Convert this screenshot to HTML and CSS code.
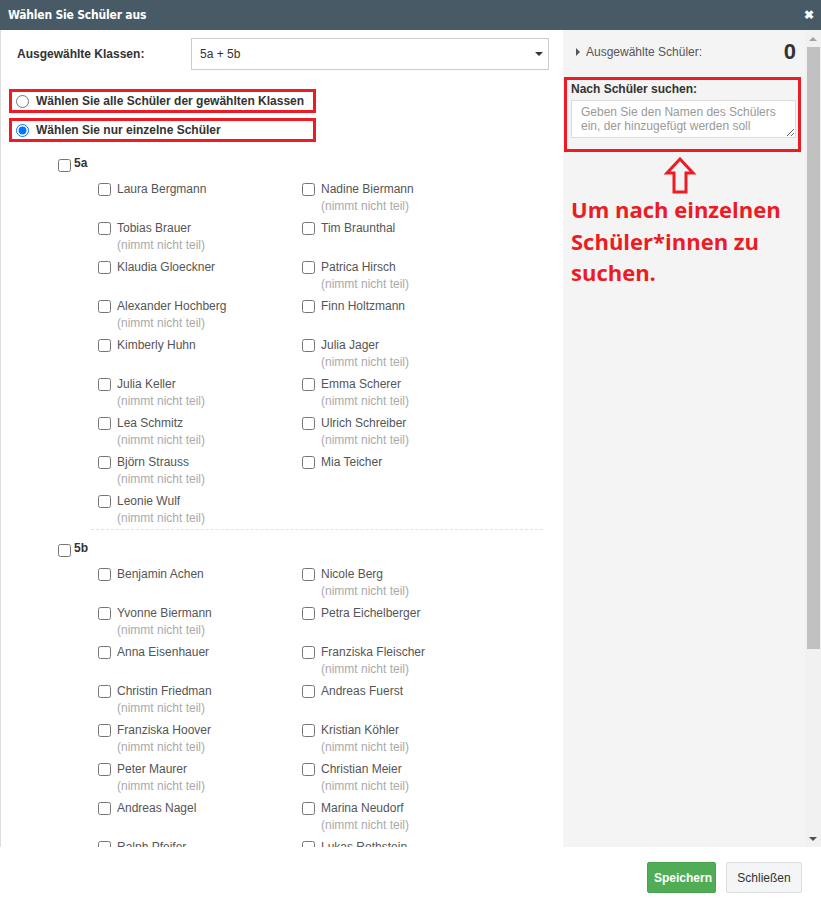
FILE: index.html
```
<!DOCTYPE html>
<html>
<head>
  <title>Wählen Sie Schüler aus</title>
  <link rel="stylesheet" href="styles.css">
</head>
<body>
  <div class="modal">
    <div class="modal-header">
      <span class="modal-title">Wählen Sie Schüler aus</span>
      <span class="close">&#10006;</span>
    </div>

    <div class="modal-body">
      <div class="main">
        <div class="class-row">
          <label class="class-label">Ausgewählte Klassen:</label>
          <div class="select">
            <span>5a + 5b</span>
            <span class="caret"></span>
          </div>
        </div>

        <label class="option first">
          <input type="radio" name="mode">
          <span>Wählen Sie alle Schüler der gewählten Klassen</span>
        </label>
        <label class="option">
          <input type="radio" name="mode" checked>
          <span>Wählen Sie nur einzelne Schüler</span>
        </label>

        <div class="group" id="group5a">
          <label class="group-head"><input type="checkbox"><span>5a</span></label>
          <div class="students"></div>
        </div>

        <div class="group" id="group5b">
          <label class="group-head"><input type="checkbox"><span>5b</span></label>
          <div class="students"></div>
        </div>
      </div>

      <div class="side">
        <div class="selected-row">
          <span class="toggle"></span>
          <span class="selected-label">Ausgewählte Schüler:</span>
          <span class="count">0</span>
        </div>
        <div class="search-box">
          <label class="search-label">Nach Schüler suchen:</label>
          <textarea placeholder="Geben Sie den Namen des Schülers ein, der hinzugefügt werden soll"></textarea>
        </div>
        <div class="hint-arrow">
          <svg width="32" height="37" viewBox="0 0 32 37">
            <path d="M16 2 L29 16 L22 16 L22 35 L10 35 L10 16 L3 16 Z" fill="none" stroke="#ed1c24" stroke-width="3" stroke-linejoin="miter"/>
          </svg>
        </div>
        <p class="hint">Um nach einzelnen Schüler*innen zu suchen.</p>
      </div>

      <div class="scrollbar">
        <div class="sb-btn up"></div>
        <div class="sb-thumb"></div>
        <div class="sb-rest"></div>
        <div class="sb-btn down"></div>
      </div>
    </div>

    <div class="modal-footer">
      <button class="btn btn-save">Speichern</button>
      <button class="btn btn-close">Schließen</button>
    </div>
  </div>

  <script>
    // Schülerlisten je Klasse: [Name, nimmt teil?]
    var classes = {
      group5a: [
        ['Laura Bergmann', true], ['Nadine Biermann', false],
        ['Tobias Brauer', false], ['Tim Braunthal', true],
        ['Klaudia Gloeckner', true], ['Patrica Hirsch', false],
        ['Alexander Hochberg', false], ['Finn Holtzmann', true],
        ['Kimberly Huhn', true], ['Julia Jager', false],
        ['Julia Keller', false], ['Emma Scherer', false],
        ['Lea Schmitz', false], ['Ulrich Schreiber', false],
        ['Björn Strauss', false], ['Mia Teicher', true],
        ['Leonie Wulf', false]
      ],
      group5b: [
        ['Benjamin Achen', true], ['Nicole Berg', false],
        ['Yvonne Biermann', false], ['Petra Eichelberger', true],
        ['Anna Eisenhauer', true], ['Franziska Fleischer', false],
        ['Christin Friedman', false], ['Andreas Fuerst', true],
        ['Franziska Hoover', false], ['Kristian Köhler', false],
        ['Peter Maurer', false], ['Christian Meier', false],
        ['Andreas Nagel', true], ['Marina Neudorf', false],
        ['Ralph Pfeifer', false], ['Lukas Rothstein', false]
      ]
    };

    Object.keys(classes).forEach(function(id) {
      var list = document.querySelector('#' + id + ' .students');
      classes[id].forEach(function(s) {
        var item = document.createElement('label');
        item.className = 'student';
        var html = '<input type="checkbox"><span class="info"><span class="name">' + s[0] + '</span>';
        if (!s[1]) {
          html += '<span class="absent">(nimmt nicht teil)</span>';
        }
        html += '</span>';
        item.innerHTML = html;
        list.appendChild(item);
      });
    });
  </script>
</body>
</html>
```

FILE: styles.css
```
* {
  box-sizing: border-box;
}

body {
  margin: 0;
  font-family: "Liberation Sans", Arial, sans-serif;
  font-size: 12px;
  color: #555;
  background: #fff;
}

.modal {
  width: 821px;
  height: 907px;
  display: flex;
  flex-direction: column;
}

.modal-header {
  height: 30px;
  flex: none;
  background: #475a65;
  color: #fff;
  display: flex;
  align-items: center;
  justify-content: space-between;
  padding: 0 7px 0 8px;
}

.modal-title {
  font-family: "DejaVu Sans Condensed", "Liberation Sans", sans-serif;
  font-weight: bold;
  font-size: 12px;
  letter-spacing: -0.2px;
}

.close {
  font-size: 12px;
  font-weight: bold;
}

.modal-body {
  height: 817px;
  flex: none;
  display: flex;
  overflow: hidden;
  border-left: 1px solid #ddd;
}

.main {
  flex: 1;
  padding: 8px 14px 0 16px;
  overflow: hidden;
}

.class-row {
  display: flex;
  align-items: center;
}

.class-label {
  width: 174px;
  flex: none;
  font-weight: bold;
  color: #333;
  font-size: 12px;
}

.select {
  width: 358px;
  flex: none;
  height: 32px;
  border: 1px solid #ccc;
  display: flex;
  align-items: center;
  justify-content: space-between;
  padding: 0 5px 0 8px;
  color: #333;
}

.caret {
  width: 0;
  height: 0;
  border-left: 4px solid transparent;
  border-right: 4px solid transparent;
  border-top: 4px solid #333;
}

.option {
  display: flex;
  align-items: center;
  width: 307px;
  height: 24px;
  margin: 5px 0 0 -8px;
  border: 3px solid #ed1c24;
  padding-left: 4px;
  font-weight: bold;
  color: #333;
}

.option.first {
  margin-top: 19px;
}

.option input {
  margin: 0 7px 0 0;
  width: 13px;
  height: 13px;
}

.group {
  margin-left: 41px;
  margin-top: 14px;
}

.group + .group {
  margin-top: 11px;
}

.group-head {
  display: flex;
  align-items: center;
  height: 17px;
  font-weight: bold;
  color: #333;
}

.group-head input {
  margin: 2px 3px 0 0;
  width: 13px;
  height: 13px;
}

.group-head span {
  margin-top: -4px;
}

.students {
  display: grid;
  grid-template-columns: 204px 1fr;
  row-gap: 5px;
  margin: 8px 0 0 33px;
  padding: 0 0 2px 7px;
  width: 452px;
  border-bottom: 1px dashed #e2e2e2;
}

.student {
  display: flex;
  align-items: flex-start;
  height: 34px;
  line-height: 17px;
}

.student input {
  margin: 2px 6px 0 0;
  width: 13px;
  height: 13px;
}

.info {
  display: flex;
  flex-direction: column;
}

.absent {
  color: #aaa;
}

.side {
  width: 242px;
  flex: none;
  background: #f4f4f4;
  padding: 0 4px 0 1px;
}

.selected-row {
  display: flex;
  align-items: center;
  height: 44px;
  padding: 0 5px 0 12px;
}

.toggle {
  width: 0;
  height: 0;
  border-top: 4px solid transparent;
  border-bottom: 4px solid transparent;
  border-left: 4px solid #555;
  margin-right: 6px;
}

.selected-label {
  flex: 1;
}

.count {
  font-size: 22px;
  font-weight: bold;
  color: #333;
}

.search-box {
  margin-top: 3px;
  border: 3px solid #ed1c24;
  height: 75px;
  padding: 2px 3px 0 4px;
}

.search-label {
  display: block;
  font-weight: bold;
  color: #333;
  line-height: 15px;
}

textarea {
  display: block;
  margin-top: 3px;
  width: 225px;
  height: 38px;
  border: 1px solid #ddd;
  padding: 4px 9px;
  font-family: "Liberation Sans", Arial, sans-serif;
  font-size: 12px;
  line-height: 14px;
  color: #555;
  resize: vertical;
  background: #fff;
}

textarea::placeholder {
  color: #999;
}

.hint-arrow {
  display: flex;
  justify-content: center;
  margin-top: 5px;
  padding-right: 6px;
}

.hint-arrow svg {
  display: block;
}

.hint {
  margin: 0;
  padding-left: 7px;
  font-family: "Open Sans", sans-serif;
  font-weight: bold;
  font-size: 22px;
  line-height: 31.5px;
  color: #ed1c24;
}

.scrollbar {
  width: 16px;
  flex: none;
  background: #f1f1f1;
  display: flex;
  flex-direction: column;
  align-items: center;
}

.sb-btn {
  height: 17px;
  flex: none;
  width: 100%;
  display: flex;
  justify-content: center;
  align-items: center;
}

.sb-btn.up::after,
.sb-btn.down::after {
  content: "";
  width: 0;
  height: 0;
  border-left: 4px solid transparent;
  border-right: 4px solid transparent;
}

.sb-btn.up::after {
  border-bottom: 4px solid #a3a3a3;
}

.sb-btn.down::after {
  border-top: 4px solid #505050;
}

.sb-thumb {
  width: 13px;
  height: 602px;
  flex: none;
  background: #c1c1c1;
}

.sb-rest {
  flex: 1;
}

.modal-footer {
  flex: 1;
  display: flex;
  justify-content: flex-end;
  align-items: flex-start;
  padding: 15px 19px 0 0;
  gap: 10px;
}

.btn {
  height: 31px;
  font-family: "Liberation Sans", Arial, sans-serif;
  font-size: 12px;
  border-radius: 2px;
  cursor: pointer;
}

.btn-save {
  width: 69px;
  background: #50ad55;
  border: 1px solid #4aa34f;
  color: #fff;
  font-weight: bold;
}

.btn-close {
  width: 76px;
  background: #f4f5f7;
  border: 1px solid #ddd;
  color: #333;
}
```
